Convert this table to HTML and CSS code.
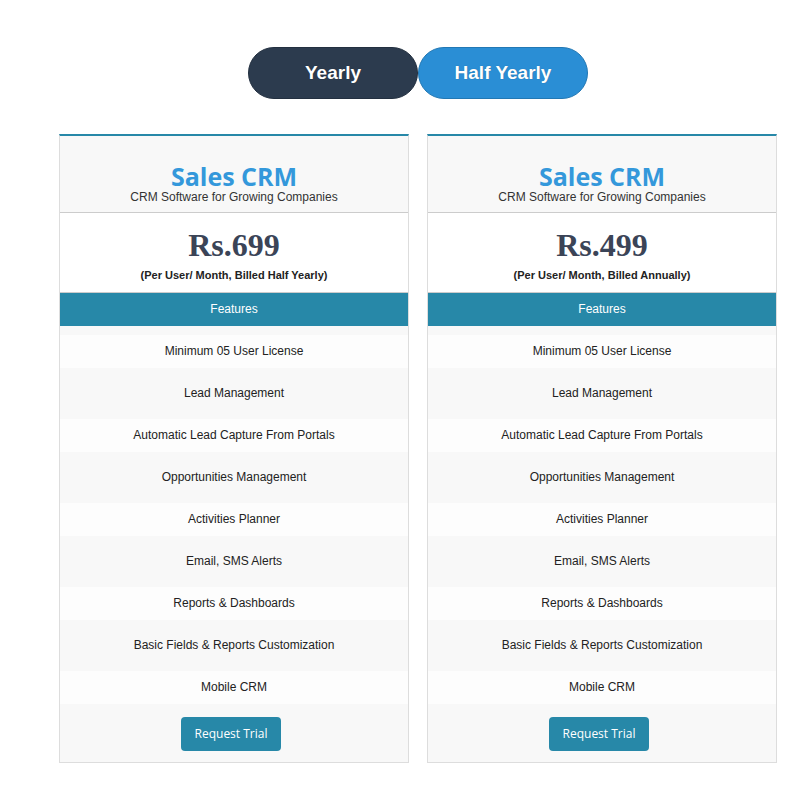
FILE: index.html
```html
<!DOCTYPE html>
<html lang="en">
<head>
    <meta charset="UTF-8">
    <meta name="viewport" content="width=device-width, initial-scale=1.0">
    <title>Sales CRM Pricing</title>
    <link rel="stylesheet" href="styles.css">
</head>
<body>

    <div class="pricing">
        <!-- Plan toggle -->
        <div class="toggle">
            <button class="toggle-btn yearly">Yearly</button>
            <button class="toggle-btn half">Half Yearly</button>
        </div>

        <div class="plans">
            <!-- Half yearly plan -->
            <div class="plan">
                <div class="plan-head">
                    <h3>Sales CRM</h3>
                    <p>CRM Software for Growing Companies</p>
                </div>
                <div class="plan-price">
                    <div class="amount">Rs.699</div>
                    <p>(Per User/ Month, Billed Half Yearly)</p>
                </div>
                <div class="features-title">Features</div>
                <ul class="features">
                    <li>Minimum 05 User License</li>
                    <li>Lead Management</li>
                    <li>Automatic Lead Capture From Portals</li>
                    <li>Opportunities Management</li>
                    <li>Activities Planner</li>
                    <li>Email, SMS Alerts</li>
                    <li>Reports &amp; Dashboards</li>
                    <li>Basic Fields &amp; Reports Customization</li>
                    <li>Mobile CRM</li>
                </ul>
                <div class="plan-foot">
                    <a href="#" class="trial-btn">Request Trial</a>
                </div>
            </div>

            <!-- Yearly plan -->
            <div class="plan">
                <div class="plan-head">
                    <h3>Sales CRM</h3>
                    <p>CRM Software for Growing Companies</p>
                </div>
                <div class="plan-price">
                    <div class="amount">Rs.499</div>
                    <p>(Per User/ Month, Billed Annually)</p>
                </div>
                <div class="features-title">Features</div>
                <ul class="features">
                    <li>Minimum 05 User License</li>
                    <li>Lead Management</li>
                    <li>Automatic Lead Capture From Portals</li>
                    <li>Opportunities Management</li>
                    <li>Activities Planner</li>
                    <li>Email, SMS Alerts</li>
                    <li>Reports &amp; Dashboards</li>
                    <li>Basic Fields &amp; Reports Customization</li>
                    <li>Mobile CRM</li>
                </ul>
                <div class="plan-foot">
                    <a href="#" class="trial-btn">Request Trial</a>
                </div>
            </div>
        </div>
    </div>

</body>
</html>
```

FILE: styles.css
```css
body {
    font-family: 'Liberation Sans', Arial, sans-serif;
    margin: 0;
    padding: 0;
    background-color: #fff;
    color: #222;
}

.pricing {
    width: 718px;
    margin-left: 59px;
    padding-top: 47px;
}

.toggle {
    display: flex;
    justify-content: center;
    margin-bottom: 35px;
}

.toggle-btn {
    width: 170px;
    height: 52px;
    border-radius: 26px;
    font-family: 'Liberation Sans', Arial, sans-serif;
    font-size: 19px;
    font-weight: bold;
    color: #fff;
    text-shadow: 0 0 1px rgba(0, 0, 0, 0.3);
    cursor: pointer;
}

.toggle-btn.yearly {
    background-color: #2c3b4e;
    border: 1px solid #233040;
}

.toggle-btn.half {
    background-color: #2a8ed5;
    border: 1px solid #2278b4;
}

.plans {
    display: flex;
    gap: 18px;
}

.plan {
    width: 350px;
    box-sizing: border-box;
    border: 1px solid #ddd;
    border-top: 2px solid #2788a8;
    text-align: center;
}

.plan-head {
    height: 77px;
    box-sizing: border-box;
    background-color: #f8f8f8;
    border-bottom: 1px solid #ccc;
    display: flex;
    flex-direction: column;
    justify-content: flex-end;
    padding-bottom: 8px;
}

.plan-head h3 {
    font-family: 'Open Sans', sans-serif;
    font-size: 25px;
    font-weight: bold;
    color: #3498db;
    margin: 0;
    line-height: 28px;
}

.plan-head p {
    font-size: 12px;
    color: #333;
    margin: 0;
    line-height: 14px;
}

.plan-price {
    height: 80px;
    box-sizing: border-box;
    background-color: #fff;
    border-bottom: 1px solid #ccc;
    padding-top: 14px;
}

.plan-price .amount {
    font-family: 'Liberation Serif', 'Times New Roman', serif;
    font-size: 32px;
    font-weight: bold;
    color: #3b4457;
    line-height: 36px;
}

.plan-price p {
    font-size: 11px;
    font-weight: bold;
    color: #222;
    margin: 6px 0 0;
    line-height: 13px;
}

.features-title {
    background-color: #2788a8;
    color: #fff;
    font-size: 12px;
    height: 33px;
    line-height: 33px;
}

.features {
    list-style: none;
    margin: 0;
    padding: 9px 0 0;
    background-color: #f8f8f8;
}

.features li {
    font-size: 12px;
    color: #222;
    height: 51px;
    line-height: 51px;
}

.features li:nth-child(odd) {
    background-color: #fdfdfd;
    height: 33px;
    line-height: 33px;
}

.plan-foot {
    background-color: #f8f8f8;
    padding: 13px 0 11px;
}

.trial-btn {
    display: inline-block;
    width: 100px;
    height: 34px;
    line-height: 34px;
    margin-right: 6px;
    background-color: #2788a8;
    color: #fff;
    border-radius: 4px;
    font-family: 'Open Sans', sans-serif;
    font-size: 12px;
    text-decoration: none;
}
```
